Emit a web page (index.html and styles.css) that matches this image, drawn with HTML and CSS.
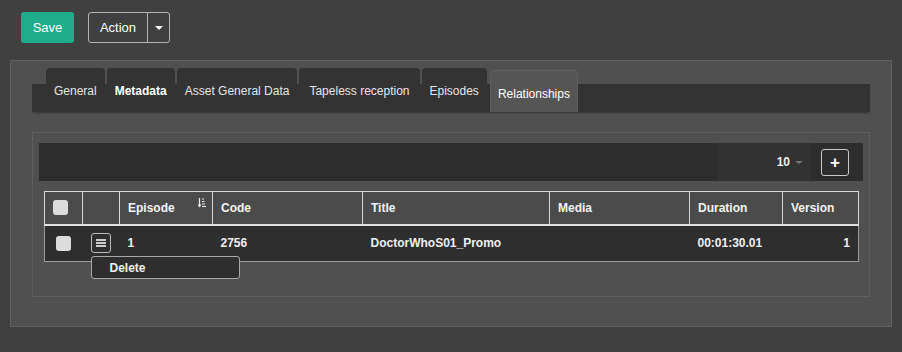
FILE: index.html
```html
<!DOCTYPE html>
<html lang="en">
<head>
    <meta charset="UTF-8">
    <title>Asset - Relationships</title>
    <link rel="stylesheet" href="styles.css">
</head>
<body>
    <div class="top-bar">
        <button class="btn-save">Save</button>
        <div class="btn-group">
            <button class="btn-action">Action</button>
            <button class="btn-caret"><span class="caret"></span></button>
        </div>
    </div>

    <div class="panel">
        <div class="tabs">
            <div class="tab">General</div>
            <div class="tab tab-strong">Metadata</div>
            <div class="tab">Asset General Data</div>
            <div class="tab tab-wide">Tapeless reception</div>
            <div class="tab">Episodes</div>
            <div class="tab active">Relationships</div>
        </div>

        <div class="inner-panel">
            <div class="grid-toolbar">
                <div class="page-size">10 <span class="caret small"></span></div>
                <button class="btn-add">+</button>
            </div>

            <table class="grid">
                <thead>
                    <tr>
                        <th class="col-check"><span class="check"></span></th>
                        <th class="col-menu"></th>
                        <th class="col-episode">Episode
                            <svg class="sort-icon" width="8" height="10" viewBox="0 0 8 10">
                                <path d="M1.5 0v8M0 6.5l1.5 2 1.5-2" stroke="#eee" stroke-width="1.2" fill="none"/>
                                <path d="M4 1h2M4 3.5h2.5M4 6h3M4 8.5h4" stroke="#eee" stroke-width="1.2"/>
                            </svg>
                        </th>
                        <th class="col-code">Code</th>
                        <th class="col-title">Title</th>
                        <th class="col-media">Media</th>
                        <th class="col-duration">Duration</th>
                        <th class="col-version">Version</th>
                    </tr>
                </thead>
                <tbody>
                    <tr>
                        <td><span class="check"></span></td>
                        <td class="menu-cell">
                            <button class="btn-menu">
                                <svg width="10" height="8" viewBox="0 0 10 8">
                                    <path d="M0 1h10M0 4h10M0 7h10" stroke="#fff" stroke-width="1.5"/>
                                </svg>
                            </button>
                            <div class="row-menu">Delete</div>
                        </td>
                        <td>1</td>
                        <td>2756</td>
                        <td>DoctorWhoS01_Promo</td>
                        <td></td>
                        <td>00:01:30.01</td>
                        <td class="num">1</td>
                    </tr>
                </tbody>
            </table>
        </div>
    </div>
</body>
</html>
```

FILE: styles.css
```css
body {
    margin: 0;
    background-color: #404040;
    font-family: "Liberation Sans", Arial, sans-serif;
    color: #eee;
}
button {
    font-family: inherit;
    cursor: pointer;
}
.top-bar {
    display: flex;
    gap: 14px;
    padding: 12px 0 0 21px;
}
.btn-save {
    width: 53px;
    height: 31px;
    border: none;
    border-radius: 3px;
    background-color: #20ad8b;
    color: #fff;
    font-size: 13px;
}
.btn-group {
    display: flex;
    height: 31px;
    border: 1px solid #b5b5b5;
    border-radius: 3px;
    box-sizing: border-box;
}
.btn-group button {
    background: transparent;
    border: none;
    color: #fff;
    font-size: 13px;
}
.btn-action {
    width: 59px;
    border-right: 1px solid #b5b5b5 !important;
}
.btn-caret {
    width: 21px;
    display: flex;
    align-items: center;
    justify-content: center;
}
.caret {
    display: inline-block;
    border-top: 4px solid #fff;
    border-left: 4px solid transparent;
    border-right: 4px solid transparent;
}
.caret.small {
    border-top-color: #777;
    border-top-width: 3px;
    border-left-width: 4px;
    border-right-width: 4px;
    margin-left: 5px;
    vertical-align: middle;
}
.panel {
    margin: 17px 10px 0 10px;
    height: 267px;
    box-sizing: border-box;
    background-color: #505050;
    border: 1px solid #606060;
    padding: 7px 21px 0 21px;
}
.tabs {
    display: flex;
    gap: 2px;
    height: 44px;
    padding-left: 14px;
    background: linear-gradient(to bottom, transparent 16px, #333 16px);
    box-shadow: 0 2px 2px -1px rgba(0, 0, 0, 0.35);
}
.tab {
    display: flex;
    align-items: center;
    padding: 1px 8px 0 8px;
    background-color: #333;
    border-radius: 4px 4px 0 0;
    color: #e6e6e6;
    font-size: 12px;
}
.tab-strong {
    font-weight: bold;
    color: #fff;
}
.tab-wide {
    padding: 1px 10px 0 10px;
}
.tab.active {
    align-self: flex-end;
    height: 42px;
    box-sizing: border-box;
    margin-left: 1px;
    padding: 5px 7px 0 7px;
    background-color: #555;
    border: 1px solid #5e5e5e;
    border-bottom: none;
    color: #fff;
}
.inner-panel {
    margin-top: 20px;
    height: 165px;
    box-sizing: border-box;
    border: 1px solid #5e5e5e;
    padding: 10px 6px 0 6px;
}
.grid-toolbar {
    display: flex;
    justify-content: flex-end;
    align-items: center;
    height: 38px;
    background-color: #2d2d2d;
    padding-right: 14px;
}
.page-size {
    align-self: stretch;
    width: 93px;
    box-sizing: border-box;
    display: flex;
    align-items: center;
    justify-content: flex-end;
    padding-right: 8px;
    background-color: #323232;
    font-size: 12px;
    font-weight: bold;
    color: #eee;
    margin-right: 10px;
}
.btn-add {
    width: 28px;
    height: 27px;
    background-color: #2d2d2d;
    border: 1px solid #c8c8c8;
    border-radius: 3px;
    color: #fff;
    font-size: 17px;
    font-weight: bold;
    line-height: 1;
    padding: 0;
}
.grid {
    margin: 10px 0 0 5px;
    width: 814px;
    border-collapse: collapse;
    table-layout: fixed;
    font-size: 12px;
    font-weight: bold;
}
.grid th, .grid td {
    box-sizing: border-box;
    padding: 0 8px;
}
.grid th {
    height: 33px;
    background-color: #4b4b4b;
    border: 1px solid #d8d8d8;
    border-bottom: 2px solid #e0e0e0;
    text-align: left;
    color: #f4f4f4;
    position: relative;
}
.grid td {
    height: 37px;
    background-color: #2e2e2e;
    border-bottom: 1px solid #9a9a9a;
    color: #f0f0f0;
}
.grid td:first-child {
    border-left: 1px solid #9a9a9a;
}
.grid td:last-child {
    border-right: 1px solid #9a9a9a;
}
.col-check { width: 38px; }
.col-menu { width: 37px; }
.col-episode { width: 93px; }
.col-code { width: 150px; }
.col-title { width: 187px; }
.col-media { width: 140px; }
.col-duration { width: 93px; }
.col-version { width: 76px; }
.check {
    display: block;
    width: 15px;
    height: 15px;
    border-radius: 3px;
    background-color: #dcdcdc;
}
td .check {
    margin-left: 3px;
}
.sort-icon {
    position: absolute;
    top: 6px;
    right: 6px;
}
.num {
    text-align: right;
}
.menu-cell {
    position: relative;
}
.btn-menu {
    display: flex;
    align-items: center;
    justify-content: center;
    width: 20px;
    height: 20px;
    padding: 0;
    background-color: #2e2e2e;
    border: 1px solid #bbb;
    border-radius: 3px;
}
.row-menu {
    position: absolute;
    left: 8px;
    top: 30px;
    width: 149px;
    height: 23px;
    box-sizing: border-box;
    padding: 4px 0 0 18px;
    background-color: #2e2e2e;
    border: 1px solid #a8a8a8;
    border-radius: 3px;
    font-size: 12px;
    color: #f0f0f0;
    z-index: 2;
}
```
